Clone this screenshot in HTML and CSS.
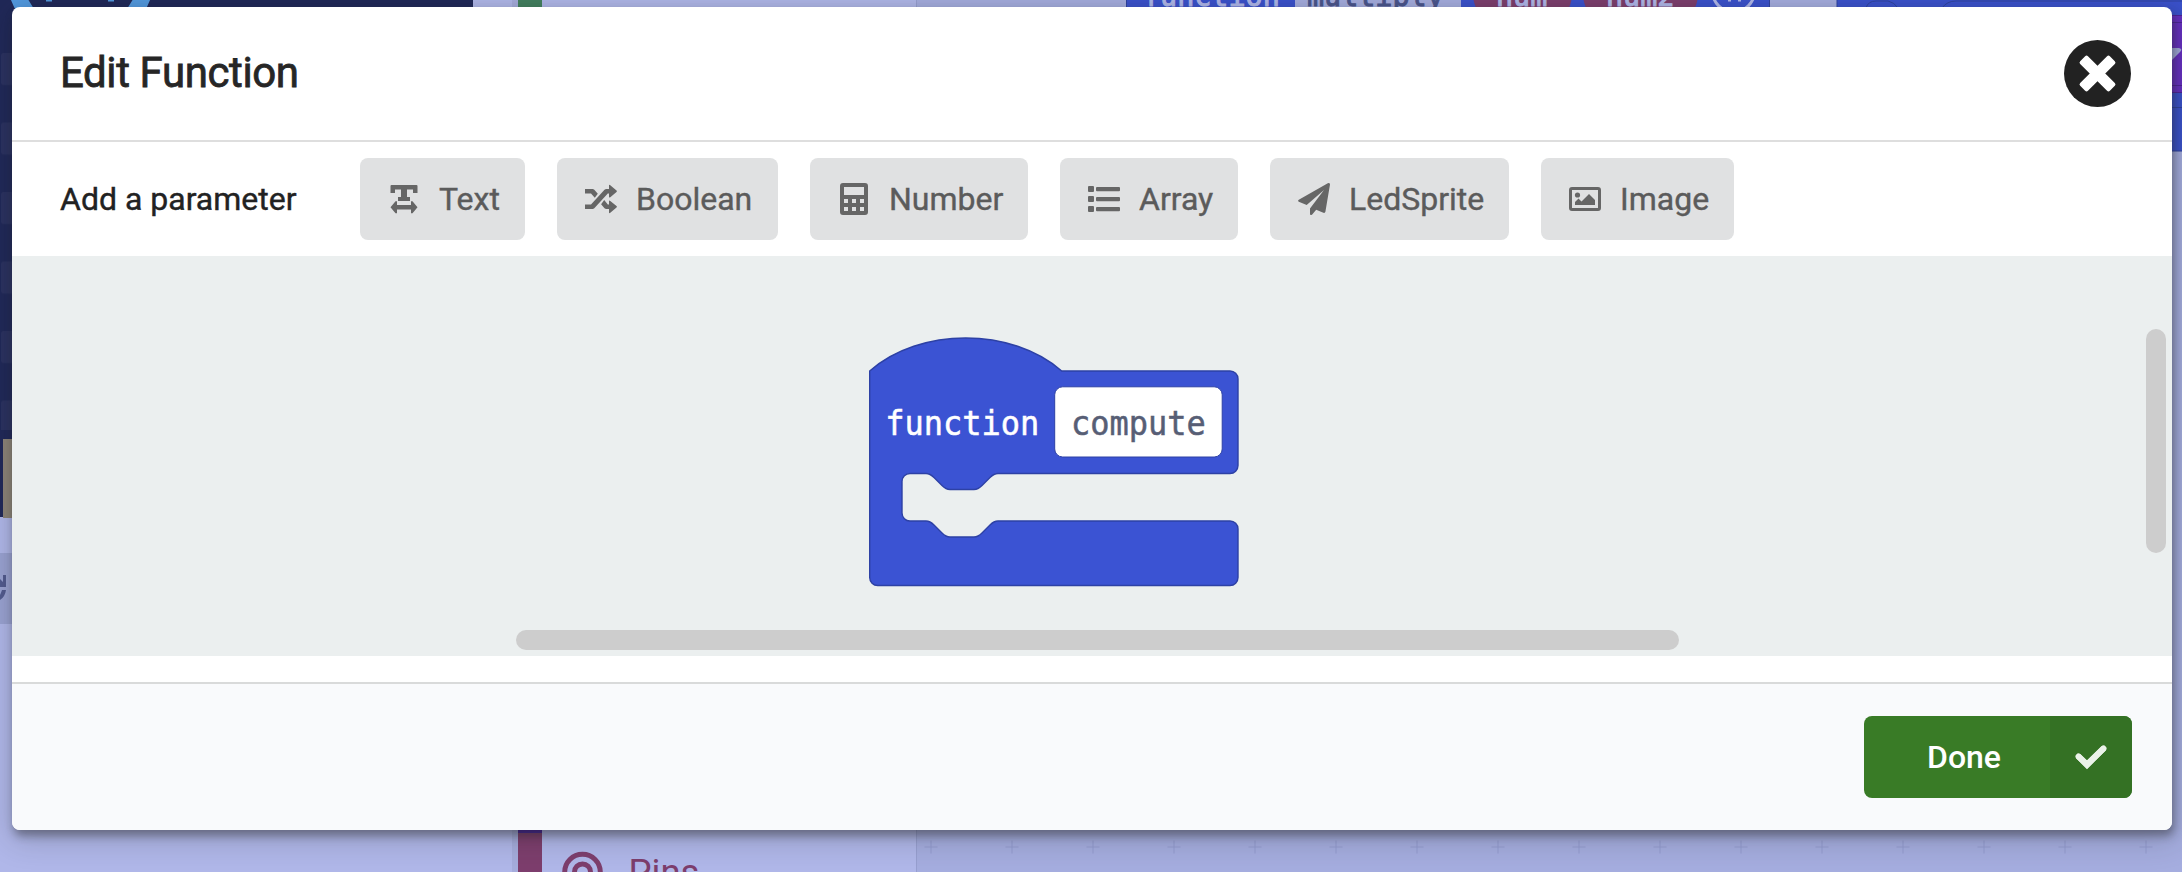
FILE: index.html
```html
<!DOCTYPE html>
<html lang="en">
<head>
<meta charset="utf-8">
<title>Edit Function</title>
<link rel="stylesheet" href="styles.css">
</head>
<body>
<div class="editor">
  <svg class="backdrop" width="2182" height="872" viewBox="0 0 2182 872" aria-hidden="true">
    <defs>
      <pattern id="plus" x="890.5" y="806.5" width="81" height="81" patternUnits="userSpaceOnUse">
        <path d="M34 40.5h13M40.5 34v13" stroke="#929ace" stroke-width="1"/>
      </pattern>
      <pattern id="leds" x="-10" y="53" width="40" height="69.5" patternUnits="userSpaceOnUse">
        <rect x="11" width="24" height="32" rx="3" fill="#2a3160"/>
      </pattern>
    </defs>
    <rect width="2182" height="872" fill="#b0b7e9"/>
    <rect x="917" width="1265" height="872" fill="#a5addf"/>
    <rect x="917" width="1265" height="872" fill="url(#plus)"/>
    <path d="M916.5 0v872" stroke="#979fd0"/>
    <rect width="473" height="517" fill="#202858"/>
    <rect y="50" width="13" height="380" fill="url(#leds)"/>
    <circle cx="80.500" cy="-26" r="66" fill="none" stroke="#5299df" stroke-width="16"/>
    <path d="M46 0h6M108 0h6" stroke="#5299df" stroke-width="3"/>
    <rect x="3" y="439" width="20" height="79" fill="#8d8478"/>
    <rect y="553" width="30" height="71" fill="#9aa2d2"/>
    <path d="M0 579l3 3V575h3v12H0zM6 590q-1 7-6 10v-5q1-2 2-5z" fill="#525b8f"/>
    <path d="M512 0h6v872h-6z" fill="#a5acdc"/>
    <rect x="518" width="24" height="20" fill="#43805f"/>
    <rect x="518" y="820" width="24" height="13" fill="#45209a"/>
    <rect x="518" y="833" width="24" height="39" fill="#7d3e6d"/>
    <g fill="none" stroke="#7d3e6d" stroke-width="5"><circle cx="582.500" cy="872" r="17.800"/><circle cx="582.500" cy="872" r="8"/></g>
    <text x="628.500" y="885" class="category">Pins</text>
    <g class="call">
      <rect x="1126.500" y="-20" width="643" height="50" fill="#3a51cc" stroke="#2e429f"/>
      <rect x="1295" y="-30" width="166" height="50" fill="#a5addf"/>
      <rect x="1473" y="-38" width="99" height="64" rx="32" fill="#7d3e6d"/>
      <rect x="1583" y="-38" width="115" height="64" rx="32" fill="#7d3e6d"/>
      <text x="1143" y="6" fill="#b0b7e9" stroke="#b0b7e9">function</text>
      <text x="1307" y="6" fill="#4a548c" stroke="#4a548c">multiply</text>
      <text x="1496" y="6" fill="#b0b7e9" stroke="#b0b7e9">num</text>
      <text x="1606" y="6" fill="#b0b7e9" stroke="#b0b7e9">num2</text>
      <circle cx="1733.500" cy="-9" r="21" fill="none" stroke="#b0b7e9" stroke-width="3"/>
      <path d="M1728 0h3M1738 0h3" stroke="#b0b7e9" stroke-width="3"/>
    </g>
    <path d="M1837-5H2190V151H1837z" fill="#3a51cc" stroke="#2e429f"/>
    <path d="M1866 8q2-7 10-7h12q6 1 10 7M1942 8q5-7 14-7H2182" fill="none" stroke="#2e429f"/>
    <path d="M2165 15h17v78h-17z" fill="#672fc3"/>
    <path d="M2165 15.500h17M2165 22.500h17M2165 85.500h17M2165 92.500h17" stroke="#4d249a"/>
    <path d="M2165 107.500h17" stroke="#2e429f"/>
    <path d="M2166 48h13q4 1 1 4l-8 8h-6z" fill="#a5addf"/>
  </svg>

  <main class="modal">
    <header class="modal-header">
      <h1 class="title">Edit Function</h1>
      <svg class="close" viewBox="0 0 67 67"><circle cx="33.500" cy="33.500" r="33.500" fill="#222"/><g transform="rotate(45 33.500 33.500)" fill="#fff"><rect x="12.500" y="28" width="42" height="11" rx="2"/><rect x="28" y="12.500" width="11" height="42" rx="2"/></g></svg>
    </header>
    <section class="params">
      <span class="params-label">Add a parameter</span>
      <button class="param param-text"><svg class="icon" viewBox="0 0 32 32"><path d="M3.500 2h25q1 0 1 1v7h-4.500V6.500h-6V14h3v4H10v-4h3V6.500H7V10H2.500V3q0-1 1-1zM2.500 24.300l5-6h1.500V22h14v-3.700h1.500l5 6-5 6H23v-3.700H9v3.700H7.500z"/></svg><span>Text</span></button>
      <button class="param param-boolean"><svg class="icon" viewBox="0 0 32 32"><path d="M0 6h7.500q1 0 1.800.8l3.500 4-3 4L6 10.500H0zM0 21.500h6L19.500 6.800q.8-.8 1.800-.8H24V2.800q0-1.600 1.300-.6l6.200 5.400q.8.700 0 1.400l-6.200 5.200q-1.300.9-1.300-.7v-3h-1.200L9.300 25.300q-.8.700-1.800.7H0zM19.200 17l3.600 4.500H24v-3q0-1.600 1.300-.6l6.200 5.200q.8.700 0 1.400l-6.200 5.300q-1.300 1-1.300-.6V26h-2.700q-1 0-1.800-.7l-3.400-4z"/></svg><span>Boolean</span></button>
      <button class="param param-number"><svg class="icon" viewBox="0 0 32 32"><path fill-rule="evenodd" d="M5 0h22q3 0 3 3v26q0 3-3 3H5q-3 0-3-3V3q0-3 3-3zM6 4v8h20V4zM6 16v4h4v-4zM14 16v4h4v-4zM22 16v4h4v-4zM6 24v4h4v-4zM14 24v4h4v-4zM22 24v4h4v-4z"/></svg><span>Number</span></button>
      <button class="param param-array"><svg class="icon" viewBox="0 0 32 32"><rect y="3" width="6" height="6" rx="1"/><rect y="13" width="6" height="6" rx="1"/><rect y="23" width="6" height="6" rx="1"/><rect x="8" y="4" width="24" height="4.200" rx="1"/><rect x="8" y="14" width="24" height="4.200" rx="1"/><rect x="8" y="24" width="24" height="4.200" rx="1"/></svg><span>Array</span></button>
      <button class="param param-sprite"><svg class="icon" viewBox="0 0 32 32"><path d="M29.800.2q2-.7 2.200 1.300l-4.600 27.300q-.4 1.500-2 1l-7.200-3-4 4.800q-1.700 1.200-2.200-.6v-5.400L26 7 8.700 22 .8 18.800q-1.400-1 0-2z"/></svg><span>LedSprite</span></button>
      <button class="param param-image"><svg class="icon" viewBox="0 0 32 32"><path fill-rule="evenodd" d="M3 4h26q3 0 3 3v18q0 3-3 3H3q-3 0-3-3V7q0-3 3-3zM3 7v18h26V7z"/><circle cx="8.500" cy="12" r="2.600"/><path d="M6 22v-3l3.500-3.500 3 3L20 11l6 6v5z"/></svg><span>Image</span></button>
    </section>
    <section class="canvas">
      <svg class="function-block" width="370" height="250" viewBox="0 0 370 250">
        <path d="M.7 34c50-44 142-44 192 0H361a8 8 0 0 1 8 8V128.500a8 8 0 0 1-8 8H129c-4 0-6 2-8 4l-8 8c-2 2-4 4-8 4H81c-4 0-6-2-8-4l-8-8c-2-2-4-4-8-4H41a8 8 0 0 0-8 8V176a8 8 0 0 0 8 8H57c4 0 6 2 8 4l8 8c2 2 4 4 8 4h24c4 0 6-2 8-4l8-8c2-2 4-4 8-4H361a8 8 0 0 1 8 8v48.500a8 8 0 0 1-8 8H8.700a8 8 0 0 1-8-8z" fill="#3b53d3" stroke="#2d41a5" stroke-width="1.400"/>
        <rect x="185.700" y="49.800" width="167.500" height="70.200" rx="8" fill="#fff" stroke="#2d41a5" stroke-width="1"/>
        <text transform="translate(16.300 98) scale(1 1.07)" fill="#fff" stroke="#fff">function</text>
        <text transform="translate(202 98) scale(1 1.07)" fill="#575e75" stroke="#575e75">compute</text>
      </svg>
      <div class="scroll-x"></div>
      <div class="scroll-y"></div>
    </section>
    <footer class="modal-footer">
      <button class="done"><span class="done-label">Done</span><span class="done-icon"><svg width="32" height="32" viewBox="0 0 32 32"><path d="M3 15l9 9L29 7" fill="none" stroke="#ebf2e9" stroke-width="6"/><path d="M3.500 15.500l8.500 8L28.500 7.500" fill="none" stroke="#ebf2e9" stroke-width="6" stroke-linecap="round"/></svg></span></button>
    </footer>
  </main>
</div>
</body>
</html>
```
FILE: styles.css
```css
* { box-sizing: border-box; }
body { margin: 0; font-family: Roboto, "Liberation Sans", sans-serif; }
button { border: 0; margin: 0; padding: 0; font: inherit; }
.editor { position: relative; width: 2182px; height: 872px; padding: 7px 10px 42px 12px; overflow: hidden; }
.backdrop { position: absolute; left: 0; top: 0; }
.category { font: 36.5px Roboto, sans-serif; fill: #7d3e6d; }
.call { font: 28.4px "DejaVu Sans Mono", monospace; }
.call text { stroke-width: 1px; }
.modal { position: relative; display: flex; flex-direction: column; width: 2160px; height: 823px; border-radius: 8px; background: #fff; box-shadow: 2px 6px 8px rgba(34,36,38,.4), 2px 6px 30px 4px rgba(34,36,38,.22); }
.modal-header { display: flex; align-items: center; justify-content: space-between; height: 135px; padding: 0 41px 0 48px; border-bottom: 2px solid #dedede; }
.title { margin: 0; font-size: 42px; font-weight: 400; line-height: 60px; letter-spacing: -.4px; color: #262626; padding-bottom: 1px; -webkit-text-stroke: .8px #262626; }
.close { width: 67px; height: 67px; }
.params { display: flex; align-items: center; height: 114px; gap: 32px; padding-left: 48px; }
.params-label { width: 268px; font-size: 32px; color: #222; white-space: nowrap; -webkit-text-stroke: .4px #222; }
.param { display: flex; align-items: center; height: 82px; padding-left: 28px; gap: 19px; border-radius: 8px; background: #e0e1e2; color: #5b5b5b; font-size: 32px; -webkit-text-stroke: .4px #5b5b5b; }
.icon { width: 32px; height: 32px; flex: none; fill: #666; }
.param-text { width: 165px; }
.param-boolean { width: 221px; }
.param-number { width: 218px; }
.param-array { width: 178px; }
.param-sprite { width: 239px; }
.param-image { width: 193px; }
.canvas { position: relative; height: 400px; padding: 81px 0 0 857px; background: #ebefef; }
.function-block { display: block; font: 32px "DejaVu Sans Mono", monospace; }
.function-block text { stroke-width: .5px; }
.scroll-x { position: absolute; left: 504px; top: 374px; width: 1163px; height: 20px; border-radius: 10px; background: #cdcdcd; }
.scroll-y { position: absolute; left: 2134px; top: 73px; width: 20px; height: 224px; border-radius: 10px; background: #cdcdcd; }
.modal-footer { display: flex; align-items: center; justify-content: flex-end; height: 148px; margin-top: 26px; padding-right: 40px; border-top: 2px solid #d9dada; border-radius: 0 0 8px 8px; background: #f9fafc; }
.done { display: flex; width: 268px; height: 82px; border-radius: 8px; overflow: hidden; background: #397b26; color: #fff; font-size: 32px; font-weight: 500; }
.done-label { display: flex; align-items: center; width: 186px; padding-left: 63px; }
.done-icon { display: flex; align-items: center; justify-content: center; width: 82px; background: #347124; }
```
